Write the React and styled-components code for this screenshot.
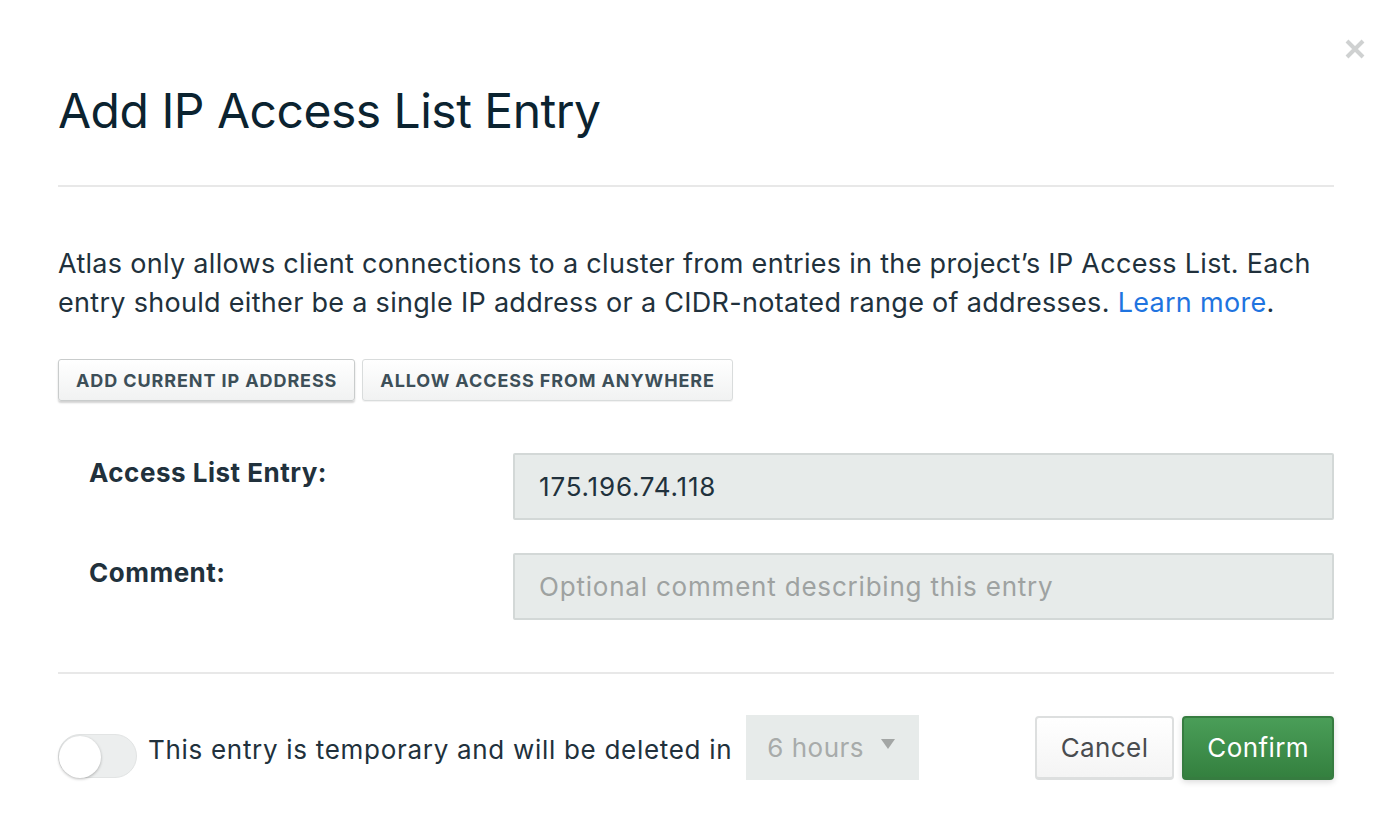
import React from 'react';
import styled, { createGlobalStyle } from 'styled-components';

const Global = createGlobalStyle`
  html, body {
    margin: 0;
    background: #fff;
  }
  body {
    font-family: Inter, "Noto Sans", sans-serif;
    color: #21313c;
  }
`;

const Modal = styled.div`
  position: relative;
  width: 1394px;
  height: 818px;
  box-sizing: border-box;
  padding: 0 60px 0 58px;
  background: #fff;
`;

const Close = styled.button`
  position: absolute;
  top: 36px;
  right: 26px;
  width: 26px;
  height: 26px;
  padding: 0;
  border: none;
  background: none;
  cursor: pointer;
`;

const Header = styled.div`
  padding: 83px 0 46px;
  border-bottom: 2px solid #e8e8e8;
`;

const Title = styled.h1`
  margin: 0;
  font-size: 48px;
  font-weight: 400;
  line-height: 56px;
  color: #0b2330;
  letter-spacing: -0.5px;
`;

const Body = styled.div`
  padding: 57px 0 52px;
  border-bottom: 2px solid #e8e8e8;
`;

const Intro = styled.p`
  margin: 0;
  font-size: 27px;
  line-height: 39px;
  color: #21313c;
  letter-spacing: 0.3px;

  a {
    color: #1f74e0;
    text-decoration: none;
  }
`;

const QuickRow = styled.div`
  display: flex;
  gap: 7px;
  margin-top: 37px;
`;

const QuickButton = styled.button`
  height: 42px;
  padding: 0 17px;
  font-family: Inter, sans-serif;
  font-size: 18px;
  font-weight: 700;
  letter-spacing: 0.9px;
  color: #3d4f58;
  text-transform: uppercase;
  background: linear-gradient(#fff, #f1f2f2);
  border: 1px solid ${p => (p.$active ? '#c9cccc' : '#d9dcdc')};
  border-radius: 3px;
  box-shadow: ${p => (p.$active ? '0 2px 2px rgba(0,0,0,0.18)' : '0 1px 1px rgba(0,0,0,0.06)')};
  cursor: pointer;
`;

const Fields = styled.div`
  display: grid;
  grid-template-columns: 455px 1fr;
  row-gap: 33px;
  margin-top: 52px;
`;

const Label = styled.label`
  padding: 5px 0 0 31px;
  font-size: 26px;
  font-weight: 700;
  line-height: 30px;
  letter-spacing: 0.5px;
  color: #21313c;
`;

const Input = styled.input`
  box-sizing: border-box;
  width: 100%;
  height: 67px;
  padding: 0 24px;
  font-family: Inter, sans-serif;
  font-size: 26px;
  letter-spacing: 0.8px;
  color: #21313c;
  background: #e7ebea;
  border: 2px solid #d3d8d7;
  border-radius: 2px;
  outline: none;

  &::placeholder {
    color: #9ea2a1;
  }
`;

const Footer = styled.div`
  display: flex;
  align-items: center;
  padding-top: 41px;
`;

const Toggle = styled.div`
  position: relative;
  width: 79px;
  height: 44px;
  margin-top: 16px;
  box-sizing: border-box;
  border-radius: 22px;
  background: #eceeee;
  border: 1px solid #e2e4e4;
  flex-shrink: 0;

  &::after {
    content: '';
    position: absolute;
    left: 0;
    top: 1px;
    width: 42px;
    height: 42px;
    border-radius: 50%;
    background: #fff;
    box-shadow: 0 1px 3px rgba(0,0,0,0.28);
  }
`;

const TempText = styled.span`
  margin: 4px 0 0 11px;
  font-size: 26px;
  letter-spacing: 0.7px;
  color: #21313c;
`;

const Select = styled.div`
  position: relative;
  width: 173px;
  height: 65px;
  margin-left: 14px;
  box-sizing: border-box;
  padding: 0 21px;
  display: flex;
  align-items: center;
  font-size: 26px;
  letter-spacing: 0.5px;
  color: #a8abaa;
  background: #e7ebea;

  &::after {
    content: '';
    position: absolute;
    right: 24px;
    top: 24px;
    border-left: 7px solid transparent;
    border-right: 7px solid transparent;
    border-top: 10px solid #a3a6a5;
  }
`;

const Actions = styled.div`
  display: flex;
  gap: 8px;
  margin-left: auto;
`;

const ActionButton = styled.button`
  height: 64px;
  padding: 0 ${p => (p.$primary ? 23 : 24)}px;
  font-family: Inter, sans-serif;
  font-size: 26px;
  letter-spacing: 0.4px;
  border-radius: 4px;
  cursor: pointer;
  color: ${p => (p.$primary ? '#fff' : '#494c4f')};
  background: ${p => (p.$primary ? 'linear-gradient(#4a9e58, #34803f)' : 'linear-gradient(#fff, #f4f4f4)')};
  border: 2px solid ${p => (p.$primary ? '#367c40' : '#dddfdf')};
  border-bottom-width: 3px;
  box-shadow: ${p => (p.$primary ? '0 2px 6px rgba(0,0,0,0.15)' : 'none')};
`;

export default function App() {
  return (
    <>
      <Global />
      <Modal>
        <Close aria-label="Close">
          <svg width="26" height="26" viewBox="0 0 26 26">
            <path d="M5 5 L21 21 M21 5 L5 21" stroke="#cfd1d1" strokeWidth="4" strokeLinecap="butt" />
          </svg>
        </Close>
        <Header>
          <Title>Add IP Access List Entry</Title>
        </Header>
        <Body>
          <Intro>
            Atlas only allows client connections to a cluster from entries in the project’s IP Access List. Each
            <br />
            entry should either be a single IP address or a CIDR-notated range of addresses. <a href="#">Learn more</a>.
          </Intro>
          <QuickRow>
            <QuickButton $active>Add current IP address</QuickButton>
            <QuickButton>Allow access from anywhere</QuickButton>
          </QuickRow>
          <Fields>
            <Label>Access List Entry:</Label>
            <Input defaultValue="175.196.74.118" />
            <Label>Comment:</Label>
            <Input placeholder="Optional comment describing this entry" />
          </Fields>
        </Body>
        <Footer>
          <Toggle />
          <TempText>This entry is temporary and will be deleted in</TempText>
          <Select>6 hours</Select>
          <Actions>
            <ActionButton>Cancel</ActionButton>
            <ActionButton $primary>Confirm</ActionButton>
          </Actions>
        </Footer>
      </Modal>
    </>
  );
}
